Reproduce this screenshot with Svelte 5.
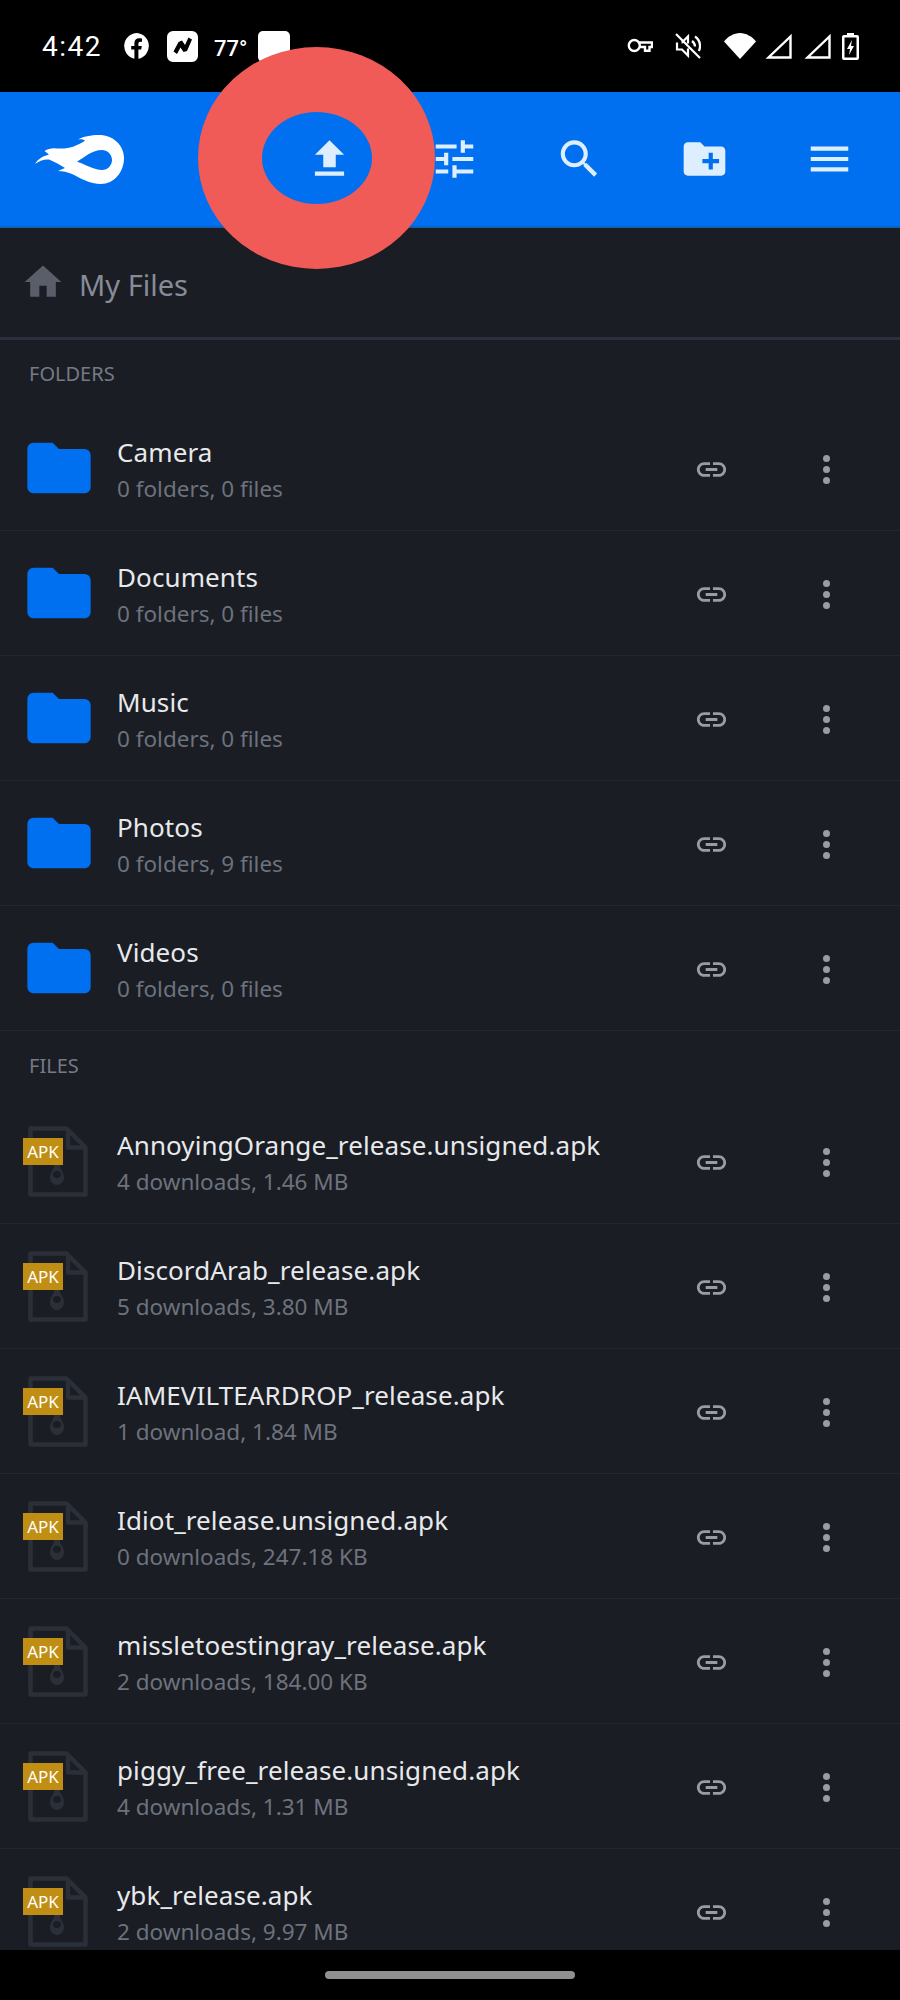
<script>
  const folders = [
    { name: 'Camera', meta: '0 folders, 0 files' },
    { name: 'Documents', meta: '0 folders, 0 files' },
    { name: 'Music', meta: '0 folders, 0 files' },
    { name: 'Photos', meta: '0 folders, 9 files' },
    { name: 'Videos', meta: '0 folders, 0 files' }
  ];
  const files = [
    { name: 'AnnoyingOrange_release.unsigned.apk', meta: '4 downloads, 1.46 MB' },
    { name: 'DiscordArab_release.apk', meta: '5 downloads, 3.80 MB' },
    { name: 'IAMEVILTEARDROP_release.apk', meta: '1 download, 1.84 MB' },
    { name: 'Idiot_release.unsigned.apk', meta: '0 downloads, 247.18 KB' },
    { name: 'missletoestingray_release.apk', meta: '2 downloads, 184.00 KB' },
    { name: 'piggy_free_release.unsigned.apk', meta: '4 downloads, 1.31 MB' },
    { name: 'ybk_release.apk', meta: '2 downloads, 9.97 MB' }
  ];
</script>

{#snippet actions()}
  <svg class="link" viewBox="0 0 24 24" aria-hidden="true">
    <path d="M3.9 12c0-1.71 1.39-3.1 3.1-3.1h4V7H7c-2.76 0-5 2.24-5 5s2.24 5 5 5h4v-1.9H7c-1.71 0-3.1-1.39-3.1-3.1zM8 13h8v-2H8v2zm9-6h-4v1.9h4c1.71 0 3.1 1.39 3.1 3.1s-1.39 3.1-3.1 3.1h-4V17h4c2.76 0 5-2.24 5-5s-2.24-5-5-5z" />
  </svg>
  <div class="dots"><i></i><i></i><i></i></div>
{/snippet}

<div class="phone">
  <header class="status">
    <span class="time">4:42</span>
    <svg class="st fb" viewBox="0 0 26 26" aria-hidden="true">
      <path d="M13 0a13 13 0 0 0-2.600 25.700V16.600H7.200V13h3.200v-2.700c0-3.200 1.900-5 4.800-5 1.400 0 2.800.3 2.800.3v3.100h-1.600c-1.600 0-2 1-2 2V13h3.400l-.6 3.600h-2.800v9.100A13 13 0 0 0 13 0z" />
    </svg>
    <svg class="st nudge" viewBox="0 0 31 31" aria-hidden="true">
      <path fill-rule="evenodd" d="M6 0h19a6 6 0 0 1 6 6v19a6 6 0 0 1-6 6H6a6 6 0 0 1-6-6V6a6 6 0 0 1 6-6zm.5 20.500 3.500 2.500 3.500-6.500 3 4.500 3.500-1 5-11.500-3.500-2-3.500 7.500-3-4.500-3.500 1.500z" />
    </svg>
    <span class="temp">77°</span>
    <span class="blank"></span>
    <span class="spacer"></span>
    <svg class="st key" viewBox="0 0 26 16" aria-hidden="true">
      <path fill="none" stroke="#fff" stroke-width="2.400" d="M12.500 4.500H25V9h-2.500v3.800H18V9h-5.500M12.800 7.500a5.500 5.500 0 1 1-11 0 5.500 5.500 0 0 1 11 0z" />
    </svg>
    <svg class="st mute" viewBox="0 0 26 26" aria-hidden="true">
      <path fill="none" stroke="#fff" stroke-width="2.200" d="M1 1l24 24M2 9.500v7h5l6 6v-7M6.500 9.500H7l6-6v7M17 8c2 1.500 3 3.200 3 5.500M20 3.500c3 2 5 5.500 5 9.500 0 1.800-.4 3.500-1.100 5" />
    </svg>
    <svg class="st wifi" viewBox="0 0 32 26" aria-hidden="true">
      <path d="M16 26 0 8.500C4 3.500 10 0 16 0s12 3.500 16 8.500z" />
    </svg>
    <svg class="st sig" viewBox="0 0 27 26" aria-hidden="true">
      <path fill="none" stroke="#fff" stroke-width="2.400" d="M25.500 3.500v21H3.500z" />
    </svg>
    <svg class="st sig sig2" viewBox="0 0 27 26" aria-hidden="true">
      <path fill="none" stroke="#fff" stroke-width="2.400" d="M25.500 3.500v21H3.500z" />
    </svg>
    <svg class="st bat" viewBox="0 0 17 27" aria-hidden="true">
      <path fill-rule="evenodd" d="M5 0h7v2h3a2 2 0 0 1 2 2v21a2 2 0 0 1-2 2H2a2 2 0 0 1-2-2V4a2 2 0 0 1 2-2h3zM2.500 4.500v20h12v-20zM10 7l-5 9h3l-1 6 5-9H9z" />
    </svg>
  </header>

  <nav class="toolbar">
    <svg class="logo" viewBox="0 0 90 50" aria-hidden="true">
      <path fill-rule="evenodd" d="M0 30C3 25 8 22 14 20.500L9.500 17C13 15 17 14 21 14.500C29 15 36 14 42 11C46 9 49 8 50 6.500C48 5.500 46 5 43 5.500C48 2.500 56 1 64 1C78 1 89 11 89 24C89 38 79 50 66 50C55 50 45 44 37 40C32 38 28 37 23 37L30 34C25 31 20 28 14 25.500C9 25 4 27 0 30ZM42 27.700C50 30 59 36 67 36C73 36 77 31 77 26C77 20 72 16 67 16C57 16 50 23 42 27.700Z" />
    </svg>
    <svg class="tool" viewBox="0 0 24 24" aria-hidden="true"><path d="M9 16h6v-6h4l-7-7-7 7h4zm-4 2h14v2H5z" /></svg>
    <svg class="tool" viewBox="0 0 24 24" aria-hidden="true"><path d="M3 17v2h6v-2H3zM3 5v2h10V5H3zm10 16v-2h8v-2h-8v-2h-2v6h2zM7 9v2H3v2h4v2h2V9H7zm14 4v-2H11v2h10zm-6-4h2V7h4V5h-4V3h-2v6z" /></svg>
    <svg class="tool" viewBox="0 0 24 24" aria-hidden="true"><path d="M15.500 14h-.79l-.28-.27C15.410 12.590 16 11.110 16 9.500 16 5.910 13.090 3 9.500 3S3 5.910 3 9.500 5.910 16 9.500 16c1.610 0 3.090-.59 4.230-1.570l.27.28v.79l5 4.990L20.490 19l-4.990-5zm-6 0C7.010 14 5 11.990 5 9.500S7.010 5 9.500 5 14 7.010 14 9.500 11.990 14 9.500 14z" /></svg>
    <svg class="tool" viewBox="0 0 24 24" aria-hidden="true"><path d="M20 6h-8l-2-2H4c-1.110 0-1.990.89-1.990 2L2 18c0 1.110.89 2 2 2h16c1.110 0 2-.89 2-2V8c0-1.110-.89-2-2-2zm-1 8h-3v3h-2v-3h-3v-2h3V9h2v3h3v2z" /></svg>
    <svg class="tool" viewBox="0 0 24 24" aria-hidden="true"><path d="M3 18h18v-2H3v2zm0-5h18v-2H3v2zm0-7v2h18V6H3z" /></svg>
  </nav>

  <div class="crumb">
    <svg class="home" viewBox="0 0 24 24" aria-hidden="true"><path d="M10 20v-6h4v6h5v-8h3L12 3 2 12h3v8z" /></svg>
    <span>My Files</span>
  </div>

  <main class="list">
    <h2>FOLDERS</h2>
    {#each folders as folder}
      <div class="row">
        <svg class="folder" viewBox="0 0 24 24" aria-hidden="true">
          <path d="M10 4H4c-1.100 0-1.990.9-1.990 2L2 18c0 1.100.9 2 2 2h16c1.100 0 2-.9 2-2V8c0-1.100-.9-2-2-2h-8l-2-2z" />
        </svg>
        <div class="text">
          <div class="name">{folder.name}</div>
          <div class="meta">{folder.meta}</div>
        </div>
        {@render actions()}
      </div>
    {/each}

    <h2 class="files-head">FILES</h2>
    {#each files as file}
      <div class="row">
        <div class="file">
          <svg viewBox="0 0 60 71" aria-hidden="true">
            <path fill="none" stroke="#2a2f38" stroke-width="4.500" stroke-linejoin="round" d="M2.500 2.500h36l19 19v47h-55zM40 2.500v19h17.500" />
            <path fill="#2a2f38" fill-rule="evenodd" d="M26 30h6v11l3 6c3 6-1 12-6 12s-9-6-6-12l3-6zm3 15c-2.500 0-4 1.500-4 3.500s1.500 3.500 4 3.500 4-1.500 4-3.500-1.500-3.500-4-3.500z" />
          </svg>
          <span class="badge">APK</span>
        </div>
        <div class="text">
          <div class="name">{file.name}</div>
          <div class="meta">{file.meta}</div>
        </div>
        {@render actions()}
      </div>
    {/each}
  </main>

  <footer class="nav"><span class="pill"></span></footer>

  <div class="ring"></div>
</div>

<style>
  :global(body) {
    margin: 0;
    background: #000;
  }
  .phone {
    position: relative;
    display: flex;
    flex-direction: column;
    width: 900px;
    height: 2000px;
    overflow: hidden;
    background: #1a1d24;
    font-family: 'Noto Sans', sans-serif;
  }
  .status {
    display: flex;
    align-items: center;
    flex: none;
    height: 92px;
    padding: 0 41px 0 42px;
    box-sizing: border-box;
    background: #000;
    color: #fff;
  }
  .time {
    width: 82px;
    font-family: Roboto, sans-serif;
    font-size: 28px;
    letter-spacing: 1.500px;
  }
  .st {
    flex: none;
    fill: #fff;
  }
  .fb {
    width: 26px;
    height: 26px;
    margin-right: 17px;
  }
  .nudge {
    width: 31px;
    height: 31px;
    margin-right: 16px;
  }
  .temp {
    width: 44px;
    margin-top: 4px;
    font-family: Roboto, sans-serif;
    font-size: 22px;
    font-weight: 500;
  }
  .blank {
    width: 32px;
    height: 31px;
    border-radius: 5px;
    background: #fff;
  }
  .spacer {
    flex: 1;
  }
  .key {
    width: 26px;
    height: 16px;
    margin-right: 22px;
  }
  .mute {
    width: 26px;
    height: 26px;
    margin-right: 23px;
  }
  .wifi {
    width: 32px;
    height: 26px;
    margin-right: 9px;
  }
  .sig {
    width: 27px;
    height: 26px;
  }
  .sig2 {
    margin: 0 11px 0 12px;
  }
  .bat {
    width: 17px;
    height: 27px;
  }
  .toolbar {
    display: flex;
    align-items: center;
    flex: none;
    height: 136px;
    padding: 0 8px 0 35px;
    box-sizing: border-box;
    background: #0070f0;
    border-bottom: 2px solid #1160b8;
  }
  .logo {
    width: 90px;
    height: 50px;
    margin-right: auto;
    fill: #fff;
  }
  .tool {
    flex: none;
    width: 50px;
    height: 50px;
    padding: 0 37.500px;
    fill: #ddeeff;
  }
  .crumb {
    display: flex;
    align-items: center;
    gap: 14px;
    flex: none;
    height: 112px;
    padding-left: 21px;
    box-sizing: border-box;
    border-bottom: 3px solid #2b303c;
    color: #868b96;
    font-size: 29px;
  }
  .crumb span {
    padding-top: 4px;
  }
  .home {
    width: 44px;
    height: 44px;
    margin-bottom: 2px;
    fill: #5a5e69;
  }
  .list {
    flex: 1;
    min-height: 0;
    overflow: hidden;
  }
  h2 {
    height: 66px;
    margin: 0;
    padding: 19px 0 0 29px;
    box-sizing: border-box;
    color: #757a84;
    font-size: 20px;
    font-weight: 400;
    line-height: 30px;
  }
  .files-head {
    height: 68px;
    padding-top: 20px;
  }
  .row {
    display: flex;
    align-items: center;
    height: 125px;
    box-sizing: border-box;
    border-bottom: 1px solid #23272e;
  }
  .folder {
    flex: none;
    width: 76px;
    height: 76px;
    margin-left: 21px;
    fill: #0070f0;
  }
  .file {
    position: relative;
    flex: none;
    width: 60px;
    height: 71px;
    margin: 0 9px 0 28px;
  }
  .file svg {
    display: block;
    width: 60px;
    height: 71px;
  }
  .badge {
    position: absolute;
    left: -5px;
    top: 12px;
    width: 40px;
    height: 27px;
    background: #c08e12;
    color: #fff;
    font-size: 17px;
    line-height: 27px;
    text-align: center;
  }
  .text {
    flex: 1;
    min-width: 0;
    margin-left: 20px;
    padding-top: 4px;
  }
  .name {
    color: #e8e9eb;
    font-size: 26px;
    letter-spacing: 0.100px;
    line-height: 36px;
    white-space: nowrap;
  }
  .meta {
    margin-top: 1px;
    color: #6d727c;
    font-size: 22.500px;
    line-height: 36px;
    white-space: nowrap;
  }
  .link {
    flex: none;
    width: 35px;
    height: 35px;
    margin: 2px 94px 0 0;
    fill: #9a9ca3;
  }
  .dots {
    display: flex;
    flex-direction: column;
    gap: 4px;
    flex: none;
    width: 7px;
    margin: 2px 70px 0 0;
  }
  .dots i {
    width: 7px;
    height: 7px;
    border-radius: 50%;
    background: #9a9ca3;
  }
  .nav {
    display: flex;
    justify-content: center;
    flex: none;
    height: 50px;
    background: #000;
  }
  .pill {
    width: 250px;
    height: 8px;
    margin-top: 21px;
    border-radius: 4px;
    background: #909090;
  }
  .ring {
    position: absolute;
    left: 198px;
    top: 47px;
    width: 110px;
    height: 92px;
    border: solid #f05a57;
    border-width: 65px 63px 65px 64px;
    border-radius: 50%;
  }
</style>
